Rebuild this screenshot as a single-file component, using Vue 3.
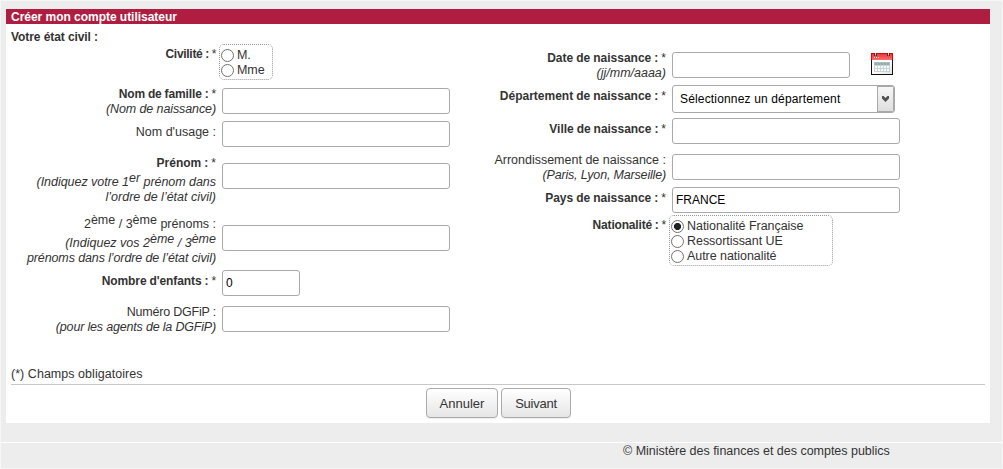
<script setup>
import { ref } from 'vue'

const title = ref('')
const nationality = ref('fr')
const children = ref('0')
const country = ref('FRANCE')
const nationalities = [
  { value: 'fr', label: 'Nationalité Française' },
  { value: 'ue', label: 'Ressortissant UE' },
  { value: 'other', label: 'Autre nationalité' },
]
</script>

<template>
  <div class="page">
    <main class="panel">
      <h1>Créer mon compte utilisateur</h1>
      <h2>Votre état civil :</h2>
      <form class="columns" @submit.prevent>
        <div class="col left">
          <div class="row civility">
            <div class="label"><b>Civilité : <em>*</em></b></div>
            <div class="radios">
              <label><input v-model="title" type="radio" name="title" value="m"><span>M.</span></label>
              <label><input v-model="title" type="radio" name="title" value="mme"><span>Mme</span></label>
            </div>
          </div>
          <div class="row family">
            <div class="label"><b>Nom de famille : <em>*</em></b><i>(Nom de naissance)</i></div>
            <input class="text" type="text">
          </div>
          <div class="row usage">
            <div class="label"><span>Nom d'usage :</span></div>
            <input class="text" type="text">
          </div>
          <div class="row first">
            <div class="label"><b>Prénom : <em>*</em></b><i class="raised">(Indiquez votre 1<sup>er</sup> prénom dans</i><i>l’ordre de l’état civil)</i></div>
            <input class="text" type="text">
          </div>
          <div class="row others">
            <div class="label"><span>2<sup>ème</sup> / 3<sup>ème</sup> prénoms :</span><i class="raised">(Indiquez vos 2<sup>ème</sup> / 3<sup>ème</sup></i><i class="tight">prénoms dans l’ordre de l’état civil)</i></div>
            <input class="text" type="text">
          </div>
          <div class="row children">
            <div class="label"><b>Nombre d'enfants : <em>*</em></b></div>
            <input v-model="children" class="text short" type="text">
          </div>
          <div class="row agent">
            <div class="label"><span>Numéro DGFiP :</span><i>(pour les agents de la DGFiP)</i></div>
            <input class="text" type="text">
          </div>
        </div>

        <div class="col right">
          <div class="row date">
            <div class="label"><b>Date de naissance : <em>*</em></b><i>(jj/mm/aaaa)</i></div>
            <input class="text medium" type="text">
            <svg class="calendar" width="22" height="22" viewBox="0 0 22 22" shape-rendering="crispEdges">
              <defs>
                <linearGradient id="calRed" x2="0" y2="1"><stop stop-color="#e83a3d" /><stop offset="1" stop-color="#fb6e6c" /></linearGradient>
                <linearGradient id="calPaper" x2="1" y2="1"><stop offset=".5" stop-color="#fff" /><stop offset="1" stop-color="#d5e7e4" /></linearGradient>
              </defs>
              <path fill="#210c0d" d="M0 0h22v22H0z" />
              <path fill="#dc0505" d="M0 0h22v7H0z" />
              <path fill="url(#calRed)" d="M1 1h20v6H1z" />
              <path fill="url(#calPaper)" d="M1 7h20v14H1z" />
              <path fill="#5b292b" d="M3 0h1v3H3zM5 0h1v3H5zM16 0h1v3h-1zM18 0h1v3h-1z" />
              <path fill="#d8c6c6" d="M4 0h1v2H4zM17 0h1v2h-1z" />
              <path fill="#ffdcdc" d="M3 4h1v1H3zM5 4h1v1H5zM7 4h1v1H7z" />
              <path fill="#a8bdbc" d="M3 9h16v3H3z" />
              <path fill="#c7d5d4" d="M3 12h16v7H3z" />
              <path fill="#8faaa8" d="M4 10h2v2H4zM7 10h2v2H7zM10 10h2v2h-2zM13 10h2v2h-2zM16 10h2v2h-2z" />
              <path fill="#f5fbfa" d="M4 13h2v2H4zM7 13h2v2H7zM10 13h2v2h-2zM13 13h2v2h-2zM16 13h2v2h-2zM4 16h2v2H4zM7 16h2v2H7zM10 16h2v2h-2zM13 16h2v2h-2zM16 16h2v2h-2z" />
            </svg>
          </div>
          <div class="row dept">
            <div class="label"><b>Département de naissance : <em>*</em></b></div>
            <div class="select">
              <span>Sélectionnez un département</span>
              <div class="arrow"><svg width="7" height="6" viewBox="0 0 7 6"><path d="M0 0h1.500L3.500 2 5.500 0H7v2.500L3.500 6 0 2.500z" fill="#505050" /></svg></div>
            </div>
          </div>
          <div class="row city">
            <div class="label"><b>Ville de naissance : <em>*</em></b></div>
            <input class="text" type="text">
          </div>
          <div class="row district">
            <div class="label"><span>Arrondissement de naissance :</span><i>(Paris, Lyon, Marseille)</i></div>
            <input class="text" type="text">
          </div>
          <div class="row country">
            <div class="label"><b>Pays de naissance : <em>*</em></b></div>
            <input v-model="country" class="text" type="text">
          </div>
          <div class="row nation">
            <div class="label"><b>Nationalité : <em>*</em></b></div>
            <div class="radios wide">
              <label v-for="n in nationalities" :key="n.value"><input v-model="nationality" type="radio" name="nationality" :value="n.value"><span>{{ n.label }}</span></label>
            </div>
          </div>
        </div>
      </form>
      <p class="required">(*) Champs obligatoires</p>
      <div class="actions">
        <button type="button" class="cancel">Annuler</button>
        <button type="button" class="next">Suivant</button>
      </div>
    </main>
    <footer><span>© Ministère des finances et des comptes publics</span></footer>
  </div>
</template>

<style>
body { margin: 0; background: #ededed; }
</style>

<style scoped>
.page {
  box-sizing: border-box;
  width: 1003px;
  height: 469px;
  padding: 8px 0 0 5px;
  border: 1px solid #f6f6f6;
  background: #ededed;
  color: #333;
  font: 12.5px/15px "Liberation Sans", Arial, sans-serif;
  overflow: hidden;
}
.panel { width: 984px; height: 414px; background: #fff; }
h1, h2 { margin: 0; padding-left: 5px; font-size: 12px; font-weight: bold; }
h1 { height: 14px; padding-top: 1px; line-height: 15px; background: #af1e40; color: #fff; letter-spacing: -.03px; }
h2 { height: 14px; padding-top: 6px; line-height: 15px; letter-spacing: -.08px; }
.columns { display: flex; height: 313px; }
.col.left { width: 450px; }
.row { display: flex; align-items: flex-start; }
.label { width: 210px; margin: 1px 6px 0 0; text-align: right; flex: none; white-space: nowrap; }
.label > * { display: block; height: 15px; }
.label b { font-size: 12px; word-spacing: -.3px; }
.label em { font-style: normal; font-weight: normal; }
.label .raised { margin-top: 4px; }
sup { font-size: 12.5px; line-height: 0; vertical-align: 4px; }
.text {
  box-sizing: border-box;
  width: 228px;
  height: 26px;
  margin: 0;
  padding: 0 3px;
  border: 1px solid #a9a9a9;
  border-radius: 3px;
  background: #fff;
  color: #000;
  font: 12px "Liberation Sans", Arial, sans-serif;
  outline: none;
}
.short { width: 78px; }
.medium { width: 178px; }
.radios {
  box-sizing: border-box;
  width: 54px;
  margin-left: -3px;
  padding: 3px 0 1px 1px;
  border: 1px dotted #999;
  border-radius: 5px;
  letter-spacing: -.05px;
}
.wide { width: 164px; }
.radios label { display: flex; align-items: center; height: 15px; white-space: nowrap; }
.radios input {
  appearance: none;
  box-sizing: border-box;
  width: 13px;
  height: 13px;
  margin: 0 3px 0 0;
  border: 1px solid #707070;
  border-radius: 50%;
  background: #fff;
  flex: none;
}
.radios input:checked { background: radial-gradient(circle, #222 3.2px, #fff 3.9px); }

.civility { height: 40px; }
.civility .label { padding-top: 2px; }
.civility b { letter-spacing: -.3px; }
.family { height: 35px; }
.family .label { padding-top: 2px; }
.family b { letter-spacing: -.12px; }
.family i { letter-spacing: -.1px; }
.family .text { margin-top: 4px; }
.usage { height: 34px; }
.usage .label { padding-top: 5px; }
.usage .text { margin-top: 2px; }
.first { height: 61px; }
.first .label { padding-top: 2px; }
.first .raised { letter-spacing: -.04px; }
.first .text { margin-top: 10px; }
.others { height: 55px; }
.others .label { padding-top: 2px; }
.others .tight { letter-spacing: -.11px; }
.others .text { margin-top: 11px; }
.children { height: 34px; }
.children .label { padding-top: 4px; }
.children b { letter-spacing: -.08px; }
.children .text { margin-top: 1px; }
.agent .label { padding-top: 1px; }
.agent span { letter-spacing: -.2px; }
.agent i { letter-spacing: -.18px; }
.agent .text { margin-top: 3px; }

.date { height: 40px; }
.date .label { padding-top: 6px; }
.date .text { margin-top: 8px; }
.calendar { margin: 9px 0 0 21px; }
.dept { height: 33px; }
.dept .label { padding-top: 4px; }
.select {
  box-sizing: border-box;
  display: flex;
  width: 223px;
  height: 28px;
  margin-top: 1px;
  border: 1px solid #a9a9a9;
  border-radius: 3px;
  color: #000;
  font-size: 12px;
  line-height: 26px;
  overflow: hidden;
}
.select span { flex: 1; padding-left: 7px; white-space: nowrap; letter-spacing: .16px; }
.arrow {
  box-sizing: border-box;
  display: flex;
  align-items: center;
  justify-content: center;
  width: 17px;
  border: 1px solid #a9a9a9;
  background: linear-gradient(#f6f6f6, #dedede);
}
.city { height: 34px; }
.city .label { padding-top: 4px; }
.city b { letter-spacing: -.03px; }
.city .text { margin-top: 1px; }
.district { height: 35px; }
.district .label { padding-top: 1px; }
.district i { letter-spacing: -.17px; }
.district .text { margin-top: 3px; }
.country { height: 29px; }
.country .label { padding-top: 4px; }
.country .text { margin-top: 1px; }
.nation .label { padding-top: 2px; }
.nation b { letter-spacing: -.18px; }

.required { margin: 0 5px; padding: 10px 0 2px; border-bottom: 1px solid #c8c8c8; letter-spacing: .04px; }
.actions { display: flex; gap: 3px; padding: 3px 0 0 420px; }
button {
  box-sizing: border-box;
  height: 30px;
  padding: 0;
  border: 1px solid #aaa;
  border-radius: 4px;
  background: linear-gradient(#fff, #e6e6e6);
  color: #333;
  font: 13px "Liberation Sans", Arial, sans-serif;
  box-shadow: 0 1px 1px #eee;
}
.cancel { width: 72px; }
.next { width: 70px; letter-spacing: -.25px; }
footer {
  margin: 19px 0 0 -5px;
  padding: 1px 0 0 622px;
  border-top: 1px solid #fff;
  letter-spacing: -.02px;
}
</style>
